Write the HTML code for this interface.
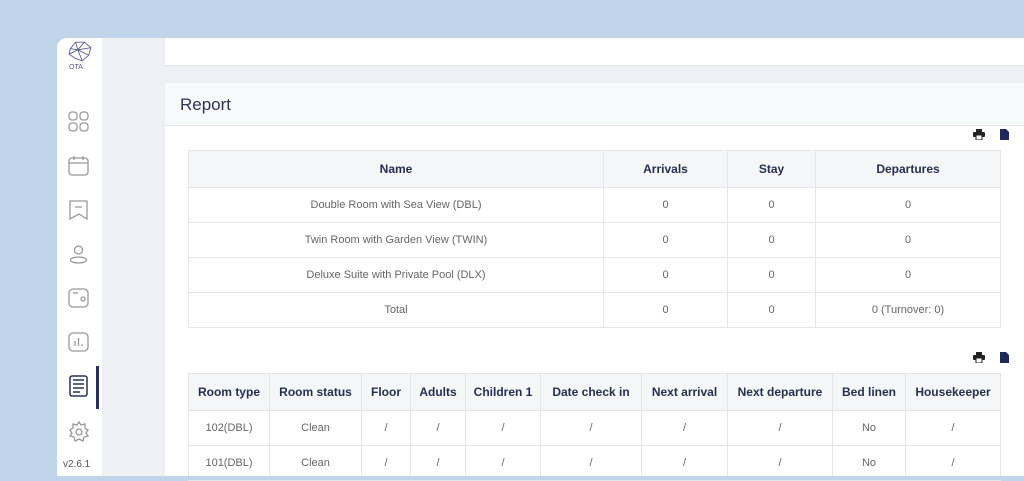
<!DOCTYPE html><html><head><style>
*{margin:0;padding:0;box-sizing:border-box}
body{width:1024px;height:480px;overflow:hidden;background:#c0d5ea;font-family:"Liberation Sans",sans-serif;position:relative}
.win{position:absolute;left:57px;top:38px;width:967px;height:438px;background:#eef0f3;border-radius:10px 0 0 0;overflow:hidden}
.side{position:absolute;left:0;top:0;width:45px;height:438px;background:#fff}
.topc{position:absolute;left:108px;top:0;width:859px;height:28px;background:#fff;border-bottom:1px solid #e4e6ea}
.card{position:absolute;left:108px;top:45px;width:859px;height:400px;background:#fff}
.ch{height:43px;background:#f8f9fa;border-bottom:1px solid #e6e8eb;padding:12px 15px;font-size:17px;color:#2e3350}
table{position:absolute;border-collapse:collapse;font-size:11px;color:#666;text-align:center}
td,th{border:1px solid #e3e5e8}
th{background:#f5f6f8;color:#26304d;font-weight:bold;font-size:12px}
svg.s{position:absolute;left:10px}
</style></head><body>
<div class="win">
<div class="side">
<svg style="position:absolute;left:9px;top:2px" width="28" height="24" viewBox="0 0 24 22" fill="none" stroke="#5a5e8a" stroke-width="0.8"><path d="M3 8L8 2L16 2L22 7L20 14L14 19L8 17L2 13Z M8 2L10 9L16 2 M10 9L22 7 M10 9L2 13 M10 9L14 19 M10 9L20 14 M3 8L10 9"/></svg>
<div style="position:absolute;left:12px;top:26px;font-size:7px;color:#5a5e8a">OTA</div>
<svg class="s" style="top:72px" width="24" height="24" fill="none" stroke="#999" stroke-width="1.3"><rect x="2" y="2" width="8" height="8" rx="3"/><rect x="13" y="2" width="8" height="8" rx="3"/><rect x="2" y="13" width="8" height="8" rx="3"/><rect x="13" y="13" width="8" height="8" rx="3"/></svg>
<svg class="s" style="top:116px" width="24" height="24" fill="none" stroke="#999" stroke-width="1.3"><rect x="2" y="4" width="19" height="17" rx="3"/><path d="M2 9H21M7 2V6M16 2V6"/></svg>
<svg class="s" style="top:160px" width="24" height="24" fill="none" stroke="#999" stroke-width="1.3"><path d="M3 3H20V21L12 16L3 21Z M8 9H15"/></svg>
<svg class="s" style="top:204px" width="24" height="24" fill="none" stroke="#999" stroke-width="1.3"><circle cx="11.5" cy="8" r="4"/><ellipse cx="11.5" cy="18" rx="8" ry="3"/></svg>
<svg class="s" style="top:248px" width="24" height="24" fill="none" stroke="#999" stroke-width="1.3"><rect x="2" y="3" width="19" height="18" rx="4"/><circle cx="16" cy="13" r="2"/><path d="M6 7H11"/></svg>
<svg class="s" style="top:292px" width="24" height="24" fill="none" stroke="#999" stroke-width="1.3"><rect x="2" y="3" width="19" height="18" rx="4"/><path d="M8 16V11M11.5 16V8M15 16V14"/></svg>
<svg class="s" style="top:336px" width="24" height="24" fill="none" stroke="#2b3255" stroke-width="1.5"><rect x="3" y="2" width="17" height="20" rx="2"/><path d="M6 6H17M6 10H17M6 14H17M6 18H13"/></svg>
<div style="position:absolute;left:39px;top:328px;width:3px;height:43px;background:#2b3255"></div>
<svg class="s" style="top:382px" width="24" height="24" fill="none" stroke="#999" stroke-width="1.3"><circle cx="12" cy="12" r="3"/><path d="M12 2L14 5L18 4L18 8L21 10L19 13L21 16L17 17L16 21L12 19L8 21L7 17L3 16L5 13L3 10L6 8L6 4L10 5Z"/></svg>
<div style="position:absolute;left:6px;top:421px;font-size:10px;color:#555">v2.6.1</div>
</div>
<div class="topc"></div>
<div class="card"><div class="ch">Report</div></div>
</div>
<svg style="position:absolute;left:973px;top:129px" width="12" height="11" viewBox="0 0 12 11"><rect x="3" y="0" width="6" height="3" fill="#222"/><rect x="0" y="3" width="12" height="5" rx="1" fill="#222"/><rect x="3" y="6" width="6" height="5" fill="#fff" stroke="#222"/></svg>
<svg style="position:absolute;left:1000px;top:129px" width="9" height="11"><path d="M0 0H6L9 3V11H0Z" fill="#1e2a5a"/></svg>
<svg style="position:absolute;left:973px;top:352px" width="12" height="11" viewBox="0 0 12 11"><rect x="3" y="0" width="6" height="3" fill="#222"/><rect x="0" y="3" width="12" height="5" rx="1" fill="#222"/><rect x="3" y="6" width="6" height="5" fill="#fff" stroke="#222"/></svg>
<svg style="position:absolute;left:1000px;top:352px" width="9" height="11"><path d="M0 0H6L9 3V11H0Z" fill="#1e2a5a"/></svg>
<table style="left:188px;top:150px;width:813px">
<tr style="height:37px"><th style="width:415px">Name</th><th style="width:124px">Arrivals</th><th style="width:88px">Stay</th><th>Departures</th></tr>
<tr style="height:35px"><td>Double Room with Sea View (DBL)</td><td>0</td><td>0</td><td>0</td></tr>
<tr style="height:35px"><td>Twin Room with Garden View (TWIN)</td><td>0</td><td>0</td><td>0</td></tr>
<tr style="height:35px"><td>Deluxe Suite with Private Pool (DLX)</td><td>0</td><td>0</td><td>0</td></tr>
<tr style="height:35px"><td>Total</td><td>0</td><td>0</td><td>0 (Turnover: 0)</td></tr>
</table>
<table style="left:188px;top:373px;width:813px">
<tr style="height:37px"><th style="width:81px">Room type</th><th style="width:92px">Room status</th><th style="width:49px">Floor</th><th style="width:55px">Adults</th><th style="width:75px">Children 1</th><th style="width:101px">Date check in</th><th style="width:86px">Next arrival</th><th style="width:105px">Next departure</th><th style="width:73px">Bed linen</th><th>Housekeeper</th></tr>
<tr style="height:35px"><td>102(DBL)</td><td>Clean</td><td>/</td><td>/</td><td>/</td><td>/</td><td>/</td><td>/</td><td>No</td><td>/</td></tr>
<tr style="height:35px"><td>101(DBL)</td><td>Clean</td><td>/</td><td>/</td><td>/</td><td>/</td><td>/</td><td>/</td><td>No</td><td>/</td></tr>
</table>
<div style="position:absolute;left:0;top:476px;width:1024px;height:4px;background:#c0d5ea"></div>
</body></html>
